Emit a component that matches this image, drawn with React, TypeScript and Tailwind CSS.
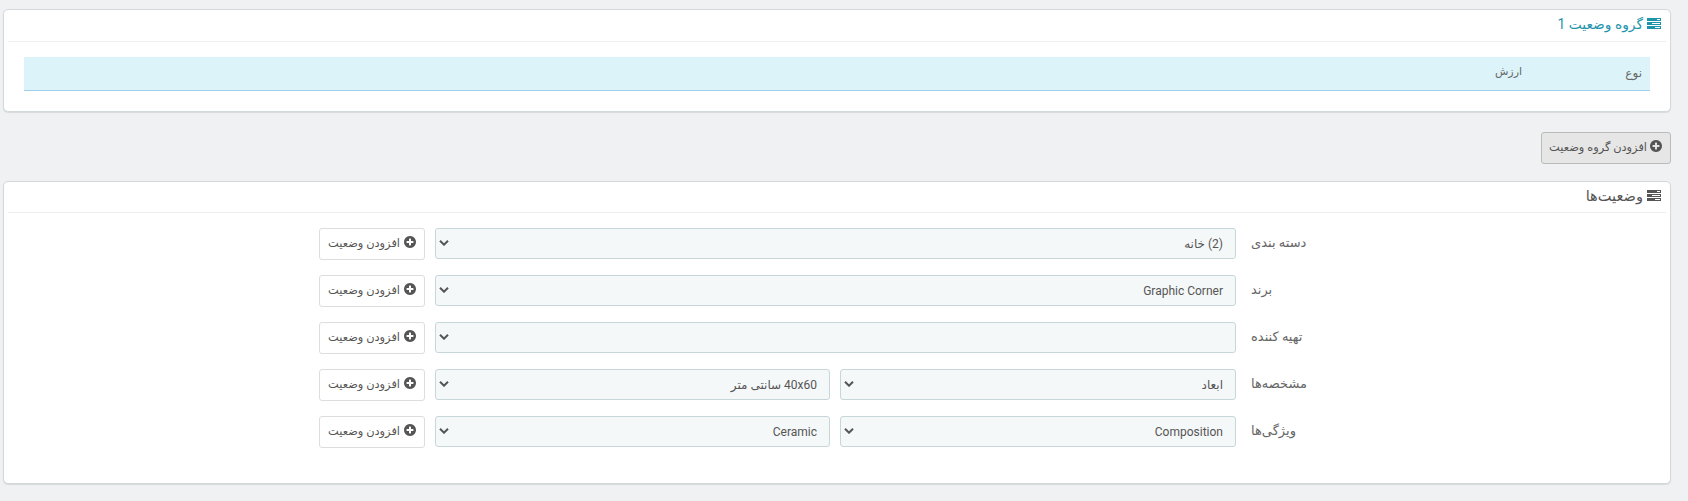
import React from "react";

function TasksIcon() {
  return (
    <svg className="mt-[1px] h-[11px] w-[14px] shrink-0" viewBox="0 0 14 11" shapeRendering="crispEdges">
      <g fill="currentColor">
        <rect width="14" height="3" />
        <rect y="4" width="14" height="3" />
        <rect y="8" width="14" height="3" />
      </g>
      <g fill="#fff">
        <rect x="10" y="1" width="3" height="1" />
        <rect x="5" y="5" width="8" height="1" />
        <rect x="8" y="9" width="5" height="1" />
      </g>
    </svg>
  );
}

function PlusIcon() {
  return (
    <svg className="mb-[3px] h-[12px] w-[12px] shrink-0 fill-current" viewBox="128 128 1536 1536">
      <path d="M1344 960v-128q0-26-19-45t-45-19h-256v-256q0-26-19-45t-45-19h-128q-26 0-45 19t-19 45v256h-256q-26 0-45 19t-19 45v128q0 26 19 45t45 19h256v256q0 26 19 45t45 19h128q26 0 45-19t19-45v-256h256q26 0 45-19t19-45zm320-64q0 209-103 385.500t-279.500 279.500-385.500 103-385.500-103-279.500-279.500-103-385.500 103-385.500 279.500-279.500 385.500-103 385.500 103 279.500 279.500 103 385.500z" />
    </svg>
  );
}

function Select({ value }: { value: string }) {
  return (
    <div className="flex h-[31px] items-center justify-between rounded-[3px] border border-[#c7d6db] bg-[#f5f8f9] pr-[12px] pl-[3px] text-[12px] text-[#555]">
      <span className="whitespace-nowrap">{value}</span>
      <svg className="mb-[2px] h-[6px] w-[10px] shrink-0" viewBox="0 0 10 6" fill="none" stroke="#555" strokeWidth="2">
        <path d="M1 0.700l4 4 4-4" />
      </svg>
    </div>
  );
}

function Row({ label, values }: { label: string; values: string[] }) {
  return (
    <div className="flex h-[32px] items-start pr-[360px]">
      <div className="flex h-[29px] w-[55px] items-center justify-end text-[13px] whitespace-nowrap text-[#666]">{label}</div>
      <div className={`mr-[15px] grid w-[801px] gap-[10px] ${values.length === 2 ? "grid-cols-[396px_395px]" : "grid-cols-1"}`}>
        {values.map((value, i) => (
          <Select key={i} value={value} />
        ))}
      </div>
      <button className="mr-[10px] flex h-[32px] w-[106px] items-center gap-[4px] rounded-[3px] border border-[#ddd] bg-white pr-[8px] pb-[1px] text-[11.4px] whitespace-nowrap text-[#555]">
        <PlusIcon />
        <span>افزودن وضعیت</span>
      </button>
    </div>
  );
}

const rows = [
  { label: "دسته بندی", values: ["(2) خانه"] },
  { label: "برند", values: ["Graphic Corner"] },
  { label: "تهیه کننده", values: [""] },
  { label: "مشخصه‌ها", values: ["ابعاد", "40x60 سانتی متر"] },
  { label: "ویژگی‌ها", values: ["Composition", "Ceramic"] },
];

export default function App() {
  return (
    <div dir="rtl" className="h-[501px] w-[1688px] bg-[#eff1f2] pt-[9px] pr-[17px] pl-[3px] font-[Roboto,'DejaVu_Sans',sans-serif]">
      <section className="h-[103px] rounded-[5px] border border-[#d3d8db] bg-white px-[4px] shadow-[0_1px_1px_rgba(0,0,0,0.1)]">
        <h3 className="flex h-[32px] items-center gap-[4px] border-b border-[#eee] pr-[5px] pb-[5px] text-[13.8px] text-[#1e94ab]">
          <TasksIcon />
          <span className="mt-[3px]">گروه وضعیت 1</span>
        </h3>
        <div className="mx-[16px] mt-[15px] flex h-[34px] items-center border-b border-[#a0d0eb] bg-[#dcf4f9] pr-[8px] pb-[2px] text-[#666]">
          <span className="w-[120px] text-[12px]">نوع</span>
          <span className="text-[11px]">ارزش</span>
        </div>
      </section>
      <button className="mt-[20px] flex h-[32px] w-[130px] items-center gap-[3px] rounded-[3px] border border-[#bbb] bg-[#e6e6e6] pr-[8px] pb-[1px] text-[11.4px] whitespace-nowrap text-[#555]">
        <PlusIcon />
        <span>افزودن گروه وضعیت</span>
      </button>
      <section className="mt-[17px] h-[303px] rounded-[5px] border border-[#d3d8db] bg-white px-[4px] shadow-[0_1px_1px_rgba(0,0,0,0.1)]">
        <h3 className="flex h-[31px] items-center gap-[4px] border-b border-[#eee] pr-[5px] pb-[4px] text-[14.6px] text-[#555]">
          <TasksIcon />
          <span className="mt-[3px]">وضعیت‌ها</span>
        </h3>
        <div className="mt-[15px] flex flex-col gap-[15px]">
          {rows.map((row) => (
            <Row key={row.label} label={row.label} values={row.values} />
          ))}
        </div>
      </section>
    </div>
  );
}
